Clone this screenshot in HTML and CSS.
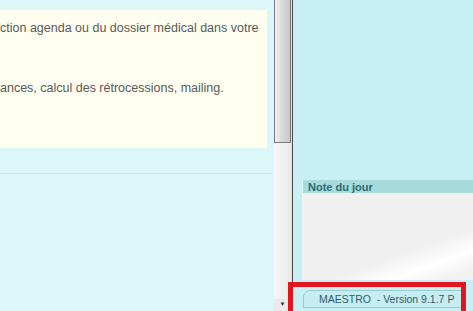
FILE: index.html
```html
<!doctype html>
<html lang="fr">

<head>
  <meta charset="utf-8" />
  <title>Maestro</title>
  <link rel="stylesheet" href="styles.css">
</head>

<body>
  <div class="main">
    <div class="intro">
      <p class="line">ction agenda ou du dossier médical dans votre</p>
      <p class="line second">ances, calcul des rétrocessions, mailing.</p>
    </div>
    <div class="rule"></div>
  </div>

  <div class="scrollbar">
    <div class="thumb"></div>
    <div class="track"></div>
    <div class="arrow">&#9660;</div>
  </div>

  <div class="side">
    <div class="note">
      <div class="note-head">Note du jour</div>
      <div class="note-body"></div>
    </div>
    <div class="footer">
      <div class="tab">MAESTRO  - Version 9.1.7 P</div>
    </div>
    <div class="highlight"></div>
  </div>
</body>

</html>
```

FILE: styles.css
```css
html,
body {
  height: 100%;
  margin: 0;
}

body {
  display: flex;
  height: 311px;
  overflow: hidden;
  font-family: "Liberation Sans", Arial, sans-serif;
}

.main {
  width: 274px;
  flex: none;
  background-color: #dcf7fa;
  padding-top: 10px;
}

.intro {
  height: 138px;
  margin-right: 7px;
  background-color: #fefff0;
  padding-top: 11px;
  box-sizing: border-box;
}

.line {
  margin: 0;
  font-size: 12.5px;
  line-height: 14px;
  color: #5a5a5a;
  white-space: nowrap;
}

.second {
  margin-top: 46px;
}

.rule {
  margin-top: 25px;
  margin-right: 2px;
  border-top: 1px solid #c4ebee;
}

.scrollbar {
  width: 17px;
  flex: none;
  display: flex;
  flex-direction: column;
  background-color: #ececec;
  border-right: 1px solid #dedede;
}

.thumb {
  height: 143px;
  box-sizing: border-box;
  border: 1px solid #7a7a7a;
  border-top: none;
  background: linear-gradient(to right, #f0f0f0, #dcdcdc 40%, #c8c8c8);
}

.track {
  flex: 1;
  background: linear-gradient(to right, #f6f6f6, #eaeaea);
}

.arrow {
  height: 12px;
  font-size: 6px;
  line-height: 10px;
  text-align: center;
  color: #333;
  background-color: #eaeaea;
}

.side {
  flex: 1;
  position: relative;
  background-color: #c8f0f4;
  border-left: 1px solid #4a4a4a;
  padding: 180px 0 0 9px;
}

.note {
  border-left: 1px solid #e4f8fa;
}

.note-head {
  height: 13px;
  background-color: #a8dcdc;
  color: #2b6b72;
  font-weight: bold;
  font-size: 11px;
  line-height: 14px;
  padding-left: 5px;
}

.note-body {
  height: 87px;
  background: linear-gradient(160deg, #f0f0f0 65%, #ffffff 80%, #f2f2f2 92%);
}

.footer {
  padding-top: 10px;
  padding-left: 1px;
}

.tab {
  width: 143px;
  height: 16px;
  padding-left: 15px;
  background-color: #c6eef2;
  border: 1px solid #98cdd2;
  border-top-left-radius: 7px;
  color: #2e5b68;
  font-size: 10.5px;
  line-height: 16px;
  white-space: pre;
}

.highlight {
  position: absolute;
  left: -5px;
  top: 282px;
  width: 168px;
  height: 30px;
  border: 5px solid #e4141d;
}
```
